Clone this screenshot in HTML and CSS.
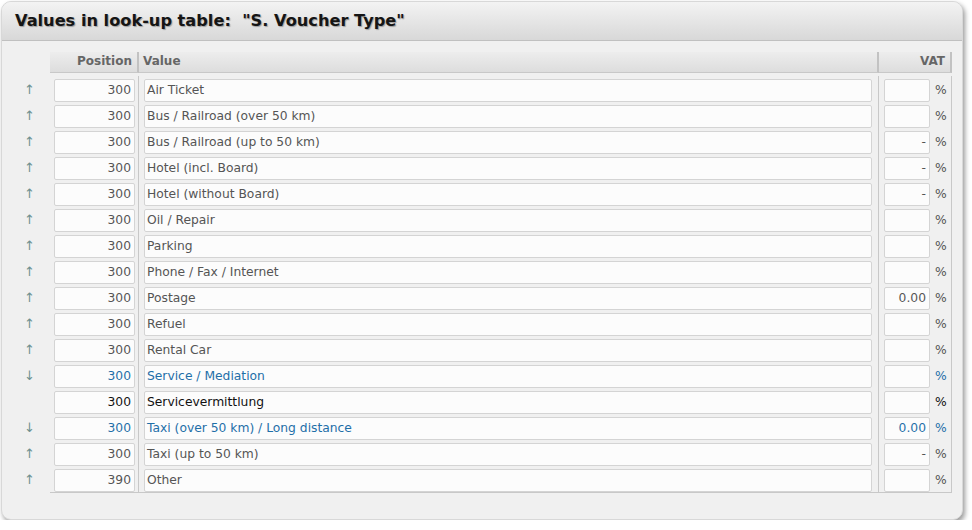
FILE: index.html
```html
<!DOCTYPE html>
<html>
<head>
<meta charset="utf-8">
<link rel="stylesheet" href="styles.css">
</head>
<body>
<div class="panel">
  <div class="panel-head">Values in look-up table:&nbsp; "S. Voucher Type"</div>
  <div class="panel-body">
    <div class="lut">
      <div class="row head">
        <div class="c-arrow"></div><div class="th c-pos">Position</div><div class="th c-val">Value</div><div class="th c-vat">VAT</div>
      </div>
      <div class="rows">
        <div class="row"><div class="c-arrow">↑</div><div class="c-pos"><div class="in num">300</div></div><div class="c-val"><div class="in">Air Ticket</div></div><div class="c-vat"><div class="in num"></div><span class="pct">%</span></div></div>
        <div class="row"><div class="c-arrow">↑</div><div class="c-pos"><div class="in num">300</div></div><div class="c-val"><div class="in">Bus / Railroad (over 50 km)</div></div><div class="c-vat"><div class="in num"></div><span class="pct">%</span></div></div>
        <div class="row"><div class="c-arrow">↑</div><div class="c-pos"><div class="in num">300</div></div><div class="c-val"><div class="in">Bus / Railroad (up to 50 km)</div></div><div class="c-vat"><div class="in num">-</div><span class="pct">%</span></div></div>
        <div class="row"><div class="c-arrow">↑</div><div class="c-pos"><div class="in num">300</div></div><div class="c-val"><div class="in">Hotel (incl. Board)</div></div><div class="c-vat"><div class="in num">-</div><span class="pct">%</span></div></div>
        <div class="row"><div class="c-arrow">↑</div><div class="c-pos"><div class="in num">300</div></div><div class="c-val"><div class="in">Hotel (without Board)</div></div><div class="c-vat"><div class="in num">-</div><span class="pct">%</span></div></div>
        <div class="row"><div class="c-arrow">↑</div><div class="c-pos"><div class="in num">300</div></div><div class="c-val"><div class="in">Oil / Repair</div></div><div class="c-vat"><div class="in num"></div><span class="pct">%</span></div></div>
        <div class="row"><div class="c-arrow">↑</div><div class="c-pos"><div class="in num">300</div></div><div class="c-val"><div class="in">Parking</div></div><div class="c-vat"><div class="in num"></div><span class="pct">%</span></div></div>
        <div class="row"><div class="c-arrow">↑</div><div class="c-pos"><div class="in num">300</div></div><div class="c-val"><div class="in">Phone / Fax / Internet</div></div><div class="c-vat"><div class="in num"></div><span class="pct">%</span></div></div>
        <div class="row"><div class="c-arrow">↑</div><div class="c-pos"><div class="in num">300</div></div><div class="c-val"><div class="in">Postage</div></div><div class="c-vat"><div class="in num">0.00</div><span class="pct">%</span></div></div>
        <div class="row"><div class="c-arrow">↑</div><div class="c-pos"><div class="in num">300</div></div><div class="c-val"><div class="in">Refuel</div></div><div class="c-vat"><div class="in num"></div><span class="pct">%</span></div></div>
        <div class="row"><div class="c-arrow">↑</div><div class="c-pos"><div class="in num">300</div></div><div class="c-val"><div class="in">Rental Car</div></div><div class="c-vat"><div class="in num"></div><span class="pct">%</span></div></div>
        <div class="row blue"><div class="c-arrow">↓</div><div class="c-pos"><div class="in num">300</div></div><div class="c-val"><div class="in">Service / Mediation</div></div><div class="c-vat"><div class="in num"></div><span class="pct">%</span></div></div>
        <div class="row dark"><div class="c-arrow"></div><div class="c-pos"><div class="in num">300</div></div><div class="c-val"><div class="in">Servicevermittlung</div></div><div class="c-vat"><div class="in num"></div><span class="pct">%</span></div></div>
        <div class="row blue"><div class="c-arrow">↓</div><div class="c-pos"><div class="in num">300</div></div><div class="c-val"><div class="in">Taxi (over 50 km) / Long distance</div></div><div class="c-vat"><div class="in num">0.00</div><span class="pct">%</span></div></div>
        <div class="row"><div class="c-arrow">↑</div><div class="c-pos"><div class="in num">300</div></div><div class="c-val"><div class="in">Taxi (up to 50 km)</div></div><div class="c-vat"><div class="in num">-</div><span class="pct">%</span></div></div>
        <div class="row last"><div class="c-arrow">↑</div><div class="c-pos"><div class="in num">390</div></div><div class="c-val"><div class="in">Other</div></div><div class="c-vat"><div class="in num"></div><span class="pct">%</span></div></div>
      </div>
    </div>
  </div>
</div>
</body>
</html>
```
FILE: styles.css
```css
html, body {
  margin: 0;
  padding: 0;
  background: #ffffff;
}
body {
  font-family: "DejaVu Sans", Verdana, sans-serif;
  font-size: 12.3px;
  color: #555;
}
.panel {
  margin: 1px 0 0 1px;
  width: 962px;
  height: 519px;
  box-sizing: border-box;
  background: #f0f0f0;
  border: 1px solid #d8d8d8;
  border-radius: 10px;
  box-shadow: 2px 3px 5px rgba(0, 0, 0, 0.4);
  overflow: hidden;
}
.panel-head {
  height: 39px;
  box-sizing: border-box;
  border-bottom: 1px solid #c0c0c0;
  background: linear-gradient(#f3f3f3, #d8d8d8);
  padding: 9px 0 0 13px;
  font-size: 16.2px;
  font-weight: bold;
  color: #151515;
  text-shadow: 1px 1px 1px rgba(0, 0, 0, 0.3);
}
.panel-body {
  padding: 11px 0 0 18px;
}
.lut {
  width: 932px;
}
.row {
  display: grid;
  grid-template-columns: 30px 89px 740px 73px;
  height: 26px;
}
.row.head {
  height: 21px;
}
.th {
  box-sizing: border-box;
  height: 21px;
  line-height: 19px;
  font-size: 12px;
  font-weight: bold;
  color: #666;
  background: linear-gradient(#ededed, #dddddd);
  border-bottom: 1px solid #c8c8c8;
  border-right: 2px solid #c2c2c2;
  padding: 0 5px;
}
.th.c-pos, .th.c-vat {
  text-align: right;
}
.th.c-val {
  padding-left: 4px;
}
.rows {
  padding-top: 3px;
}
.rows .c-pos, .rows .c-val, .rows .c-vat {
  box-sizing: border-box;
  border-right: 1px solid #c8c8c8;
  padding-top: 2px;
}
.rows .row:first-child .c-pos, .rows .row:first-child .c-val, .rows .row:first-child .c-vat {
  padding-top: 3px;
}
.rows .row:first-child {
  height: 27px;
}
.rows .row.last .c-pos, .rows .row.last .c-val, .rows .row.last .c-vat {
  border-bottom: 1px solid #c8c8c8;
}
.rows .c-arrow {
  color: #6f9090;
  font-size: 13px;
  line-height: 26px;
  padding-left: 4px;
}
.rows .row:first-child .c-arrow {
  line-height: 28px;
}
.rows .c-pos {
  padding-left: 4px;
  padding-right: 3px;
}
.rows .c-val {
  padding-left: 5px;
  padding-right: 6px;
}
.rows .c-vat {
  display: flex;
  align-items: flex-start;
  padding-left: 5px;
}
.in {
  height: 23px;
  line-height: 21px;
  box-sizing: border-box;
  background: #fcfcfc;
  border: 1px solid #d4d4d4;
  border-radius: 2px;
  padding: 0 3px 0 2px;
  white-space: nowrap;
  overflow: hidden;
}
.in.num {
  text-align: right;
}
.c-vat .in {
  width: 46px;
  flex: none;
}
.pct {
  margin-left: 5px;
  line-height: 23px;
  color: #555;
}
.blue .in, .blue .pct {
  color: #1f6fa8;
}
.dark .in, .dark .pct {
  color: #111;
}
```
